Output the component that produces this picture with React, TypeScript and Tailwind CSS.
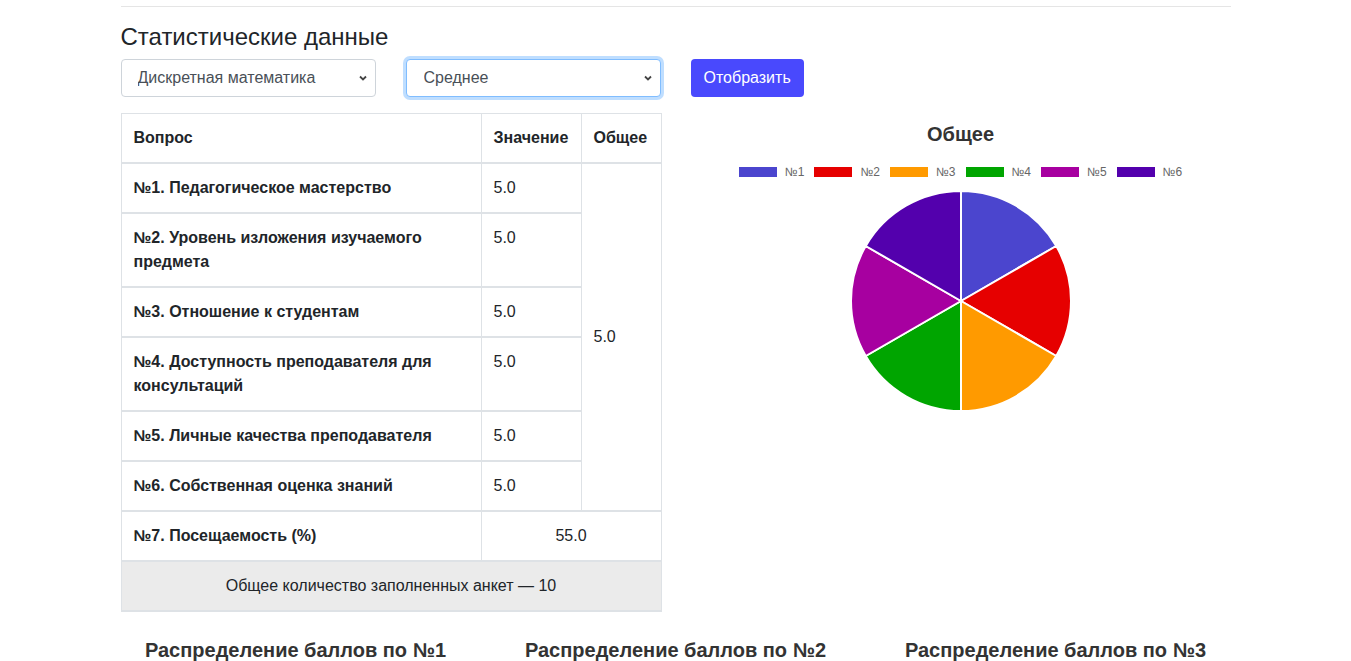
import React from 'react';

const questions = [
  { label: '№1. Педагогическое мастерство', value: '5.0' },
  { label: '№2. Уровень изложения изучаемого предмета', value: '5.0' },
  { label: '№3. Отношение к студентам', value: '5.0' },
  { label: '№4. Доступность преподавателя для консультаций', value: '5.0' },
  { label: '№5. Личные качества преподавателя', value: '5.0' },
  { label: '№6. Собственная оценка знаний', value: '5.0' },
];

const slices = [
  { name: '№1', color: '#4b45ce', d: 'M110 110 L110 0 A110 110 0 0 1 205.26 55 Z' },
  { name: '№2', color: '#e60000', d: 'M110 110 L205.26 55 A110 110 0 0 1 205.26 165 Z' },
  { name: '№3', color: '#ff9a00', d: 'M110 110 L205.26 165 A110 110 0 0 1 110 220 Z' },
  { name: '№4', color: '#00a500', d: 'M110 110 L110 220 A110 110 0 0 1 14.74 165 Z' },
  { name: '№5', color: '#a700a0', d: 'M110 110 L14.74 165 A110 110 0 0 1 14.74 55 Z' },
  { name: '№6', color: '#5300ad', d: 'M110 110 L14.74 55 A110 110 0 0 1 110 0 Z' },
];

const Chevron = () => (
  <svg width="8" height="8" viewBox="0 0 8 8" className="pointer-events-none absolute right-[9px] top-[15px]">
    <path d="M1 2.5 L4 5.5 L7 2.5" fill="none" stroke="#444" strokeWidth="1.8" />
  </svg>
);

const cell = 'border-x border-y-2 border-[#dee2e6] px-3 py-3 align-top leading-6';

export default function App() {
  return (
    <div className="min-h-screen bg-white text-[#212529] text-base" style={{ fontFamily: '"Liberation Sans", Arial, sans-serif' }}>
      <div className="mx-auto w-[1140px] px-[15px] pt-[6px]">
        <hr className="border-0 border-t border-black/10 mb-4" />
        <h4 className="text-2xl leading-[1.2] font-medium mb-[7px]">Статистические данные</h4>

        {/* Filters */}
        <div className="flex -mx-[15px]">
          <div className="w-[285px] px-[15px]">
            <div className="relative">
              <select className="w-full h-[38px] appearance-none rounded border border-[#ced4da] bg-white pl-4 pr-8 text-[#495057] outline-none">
                <option>Дискретная математика</option>
              </select>
              <Chevron />
            </div>
          </div>
          <div className="w-[285px] px-[15px]">
            <div className="relative">
              <select className="w-full h-[38px] appearance-none rounded border border-[#80bdff] bg-white pl-[17px] pr-8 text-[#495057] outline-none shadow-[0_0_0_3px_rgba(0,123,255,0.25)]">
                <option>Среднее</option>
              </select>
              <Chevron />
            </div>
          </div>
          <div className="px-[15px]">
            <button className="h-[38px] rounded bg-[#4949fd] px-[13px] text-white leading-6">Отобразить</button>
          </div>
        </div>

        {/* Table + pie */}
        <div className="flex -mx-[15px] mt-4">
          <div className="w-[570px] px-[15px]">
            <table className="w-[540px] table-fixed border-collapse">
              <thead>
                <tr>
                  <th className="w-[360px] border border-b-2 border-[#dee2e6] px-3 py-3 text-left font-bold leading-6">Вопрос</th>
                  <th className="w-[100px] border border-b-2 border-[#dee2e6] px-3 py-3 text-left font-bold leading-6">Значение</th>
                  <th className="w-[80px] border border-b-2 border-[#dee2e6] px-3 py-3 text-left font-bold leading-6">Общее</th>
                </tr>
              </thead>
              <tbody>
                {questions.map((q, i) => (
                  <tr key={q.label}>
                    <td className={`${cell} font-bold`}>{q.label}</td>
                    <td className={cell}>{q.value}</td>
                    {i === 0 && (
                      <td rowSpan={6} className="border-x border-y-2 border-[#dee2e6] px-3 align-middle leading-6">
                        5.0
                      </td>
                    )}
                  </tr>
                ))}
                <tr>
                  <td className={`${cell} font-bold`}>№7. Посещаемость (%)</td>
                  <td colSpan={2} className={`${cell} text-center`}>55.0</td>
                </tr>
                <tr>
                  <td colSpan={3} className={`${cell} bg-[#ebebeb] text-center`}>
                    Общее количество заполненных анкет — 10
                  </td>
                </tr>
              </tbody>
            </table>
          </div>

          <div className="w-[570px] px-[15px] pt-[9px] flex flex-col items-center">
            <div className="text-xl font-bold leading-6 text-[#333]">Общее</div>
            <div className="mt-5 flex items-center gap-[10px] text-xs leading-3 text-[#666]">
              {slices.map((s) => (
                <div key={s.name} className="flex items-center gap-2">
                  <span className="block w-[38px] h-[10px]" style={{ backgroundColor: s.color }} />
                  <span>{s.name}</span>
                </div>
              ))}
            </div>
            <svg width="222" height="222" viewBox="-1 -1 222 222" className="mt-[12px]">
              {slices.map((s) => (
                <path key={s.name} d={s.d} fill={s.color} stroke="#fff" strokeWidth="2" strokeLinejoin="round" />
              ))}
            </svg>
          </div>
        </div>

        {/* Distribution headings */}
        <div className="flex -mx-[15px] mt-[26px]">
          {[1, 2, 3].map((n) => (
            <div key={n} className="w-[380px] px-[15px] text-center text-xl font-bold leading-6 text-[#333]">
              Распределение баллов по №{n}
            </div>
          ))}
        </div>
      </div>
    </div>
  );
}
